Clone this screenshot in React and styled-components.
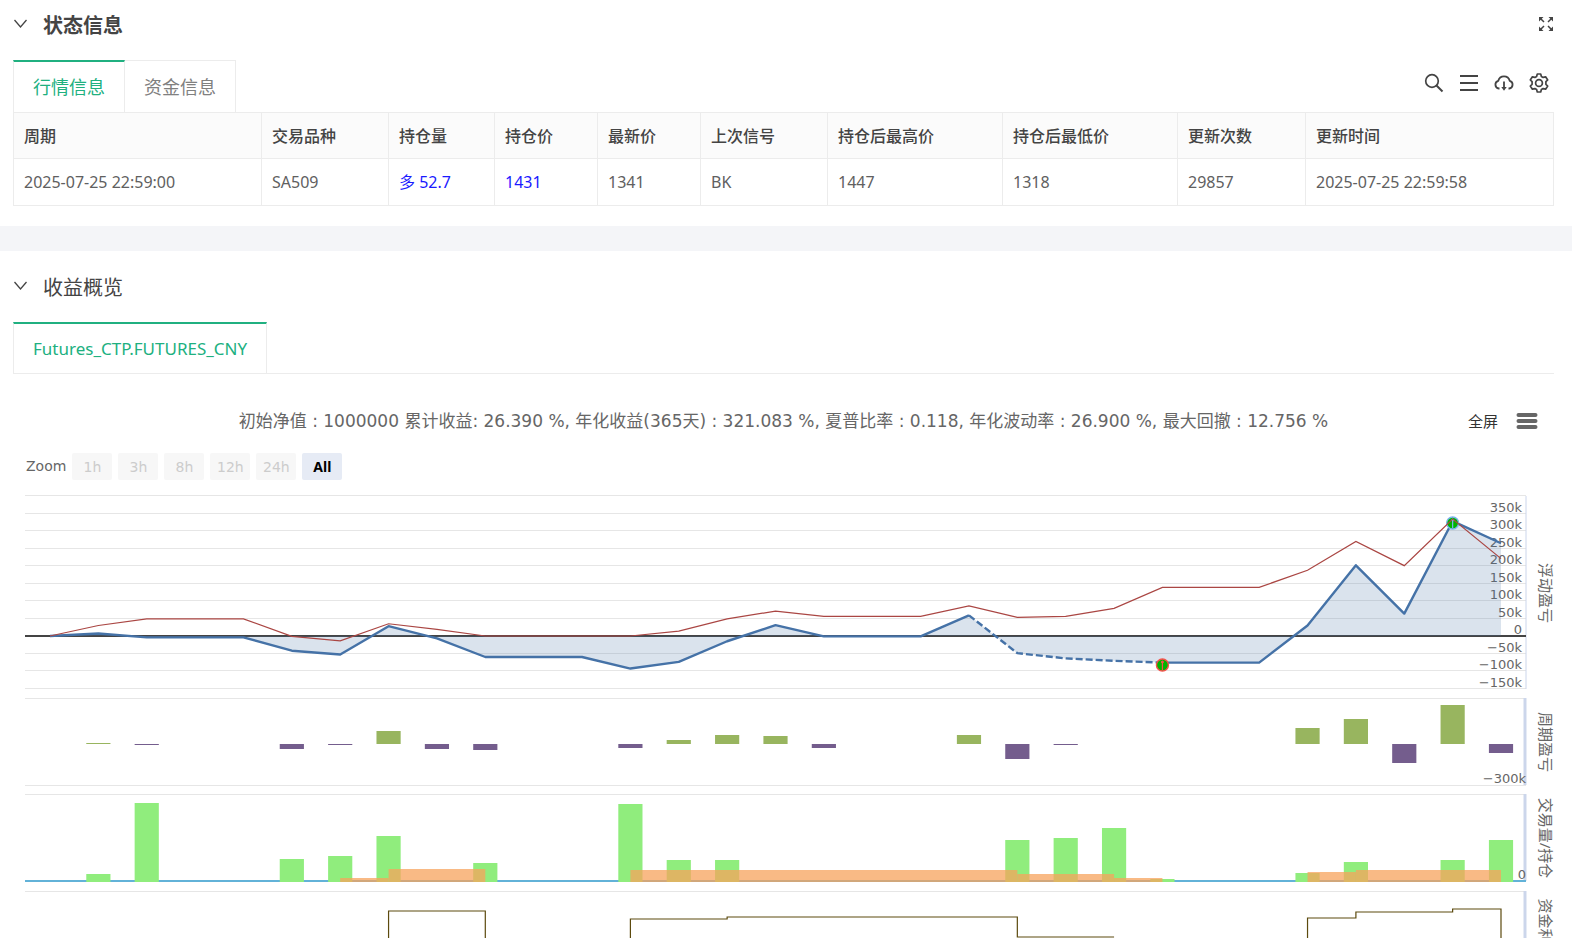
import { useEffect, useRef, useState } from "react";
import styled, { createGlobalStyle } from "styled-components";

const columns = [
  { title: "周期", width: 248, value: "2025-07-25 22:59:00" },
  { title: "交易品种", width: 127, value: "SA509" },
  { title: "持仓量", width: 106, value: "多 52.7", blue: true },
  { title: "持仓价", width: 103, value: "1431", blue: true },
  { title: "最新价", width: 103, value: "1341" },
  { title: "上次信号", width: 127, value: "BK" },
  { title: "持仓后最高价", width: 175, value: "1447" },
  { title: "持仓后最低价", width: 175, value: "1318" },
  { title: "更新次数", width: 128, value: "29857" },
  { title: "更新时间", width: 248, value: "2025-07-25 22:59:58" },
];

const ranges = ["1h", "3h", "8h", "12h", "24h", "All"];

// floating profit and total profit, in thousands
const floating = [
  0, 7, -4, -4, -4, -42, -53, 28, -7, -60, -60, -60, -93, -74, -15, 31, -1, -1,
  -1, 59, -49, -64, -71, -76, -76, -76, 30, 202, 64, 328, 265,
];
const total = [
  0, 30, 49, 49, 49, -1, -14, 35, 19, 0, 0, 0, 0, 14, 49, 71, 56, 56, 56, 86,
  53, 56, 79, 139, 139, 139, 188, 270, 201, 334, 221,
];

// [index, height]
const periodBars = [
  [1, 1], [2, -1], [5, -5], [6, -1], [7, 13], [8, -5], [9, -6], [12, -4],
  [13, 4], [14, 9], [15, 8], [16, -4], [19, 9], [20, -15], [21, -1],
  [26, 16], [27, 25], [28, -19], [29, 39], [30, -9],
];
const volumeBars = [
  [1, 8], [2, 79], [5, 23], [6, 26], [7, 46], [9, 19], [12, 78], [13, 22],
  [14, 22], [20, 42], [21, 44], [22, 54], [23, 3], [26, 9], [27, 20],
  [29, 22], [30, 42],
];

// [from, to, height]
const positions = [
  [6, 7, 4], [7, 9, 13], [12, 20, 12], [20, 22, 8], [22, 23, 4],
  [26, 27, 10], [27, 30, 12],
];

// steps of the fund usage line, [from, to, y]
const usage = [
  [[7, 9, 431]],
  [[12, 14, 439], [14, 20, 437], [20, 22, 457]],
  [[26, 27, 438], [27, 29, 432], [29, 30, 429]],
];

const ticks = [350, 300, 250, 200, 150, 100, 50, 0, -50, -100, -150];
const POINTS = 31;
const ZERO = 156;
const PERIOD_ZERO = 264;
const VOLUME_ZERO = 401;
const LEFT = 12;
const INSET = 25;

function Chart() {
  const box = useRef(null);
  const [width, setWidth] = useState(1540);

  useEffect(() => {
    const observer = new ResizeObserver(([entry]) =>
      setWidth(entry.contentRect.width)
    );
    observer.observe(box.current);
    return () => observer.disconnect();
  }, []);

  const right = width - 28;
  const step = (right - LEFT - 2 * INSET) / (POINTS - 1);
  const x = (i) => LEFT + INSET + i * step;
  const y = (value) => ZERO - value * 0.35;
  const line = (values, from = 0) =>
    values.map((v, i) => `${x(i + from)},${y(v)}`).join(" ");

  const usagePath = (steps) => {
    const last = steps[steps.length - 1];
    return (
      `M${x(steps[0][0])} 480` +
      steps.map(([a, b, top]) => `V${top}H${x(b)}`).join("") +
      (last[2] > 450 ? "" : "V480")
    );
  };

  return (
    <ChartBox ref={box}>
      <svg width={width} height="480" role="img" aria-label="收益概览">
        <g stroke="#e6e6e6">
          {[400, ...ticks].map((t) => (
            <line key={t} x1={LEFT} x2={right} y1={Math.round(y(t)) - 0.5} y2={Math.round(y(t)) - 0.5} />
          ))}
          {[218.5, 305.5, 314.5, 411.5].map((t) => (
            <line key={t} x1={LEFT} x2={right} y1={t} y2={t} />
          ))}
        </g>
        <g stroke="#ccd6eb">
          <line x1={right} x2={right} y1="16" y2="209" />
          <line x1={right - 1} x2={right - 1} y1="218" y2="305" strokeWidth="3" />
          <line x1={right - 1} x2={right - 1} y1="314" y2="401" strokeWidth="3" />
          <line x1={right - 1} x2={right - 1} y1="411" y2="480" strokeWidth="3" />
        </g>

        <AxisLabels textAnchor="end">
          {ticks.map((t) => (
            <text key={t} x={right - 4} y={Math.round(y(t)) - 2}>
              {t === 0 ? "0" : `${t < 0 ? "-" : ""}${Math.abs(t)}k`.replace("-", "−")}
            </text>
          ))}
        </AxisLabels>

        <line x1={LEFT} x2={right} y1={ZERO} y2={ZERO} stroke="#444" strokeWidth="2" />
        <polygon
          points={`${x(0)},${ZERO} ${line(floating)} ${x(30)},${ZERO}`}
          fill="#4572a7"
          fillOpacity="0.2"
        />
        <g fill="none" stroke="#4572a7" strokeWidth="2.4" strokeLinejoin="round">
          <polyline points={line(floating.slice(0, 20))} />
          <polyline points={line(floating.slice(19, 24), 19)} strokeDasharray="7 3" />
          <polyline points={line(floating.slice(23), 23)} />
        </g>
        <Marker x={x(23)} y={185} color="#f5524c" />
        <Marker x={x(29)} y={43} color="#7cb5ec" />
        <polyline points={line(total)} fill="none" stroke="#aa4643" strokeWidth="1.2" />

        {periodBars.map(([i, h]) => (
          <rect
            key={i}
            x={x(i) - step / 4}
            y={h > 0 ? PERIOD_ZERO - h : PERIOD_ZERO}
            width={step / 2}
            height={Math.abs(h)}
            fill={h > 0 ? "#98b55f" : "#745d8d"}
          />
        ))}

        <line x1={LEFT} x2={right} y1={VOLUME_ZERO} y2={VOLUME_ZERO} stroke="#62b2d8" strokeWidth="2" />
        {volumeBars.map(([i, h]) => (
          <rect
            key={i}
            x={x(i) - step / 4}
            y={VOLUME_ZERO + 1 - h}
            width={step / 2}
            height={h}
            fill="#90ed7d"
          />
        ))}
        {positions.map(([a, b, h]) => (
          <rect
            key={a}
            x={x(a)}
            y={VOLUME_ZERO + 1 - h}
            width={x(b) - x(a)}
            height={h}
            fill="#f7a35c"
            fillOpacity="0.75"
          />
        ))}

        {usage.map((steps) => (
          <path key={steps[0][0]} d={usagePath(steps)} fill="none" stroke="#5c4a0e" strokeWidth="1.2" />
        ))}

        <AxisLabels textAnchor="end">
          <text x={right} y="303">−300k</text>
          <text x={right} y="399">0</text>
        </AxisLabels>
        <AxisTitles textAnchor="middle">
          <text transform={`translate(${right + 14} 113) rotate(90)`}>浮动盈亏</text>
          <text transform={`translate(${right + 14} 262) rotate(90)`}>周期盈亏</text>
          <text transform={`translate(${right + 14} 358) rotate(90)`}>交易量/持仓</text>
          <text transform={`translate(${right + 14} 456) rotate(90)`}>资金利用率</text>
        </AxisTitles>
      </svg>
    </ChartBox>
  );
}

function Marker({ x, y, color }) {
  return (
    <g stroke={color}>
      <circle cx={x} cy={y} r="6" fill="#00b400" strokeWidth="1.4" />
      <path d={`M${x} ${y - 4}V${y + 5}`} strokeWidth="1.2" />
      <circle cx={x} cy={y - 3} r="1" fill={color} />
    </g>
  );
}

function Chevron() {
  return (
    <svg width="14" height="14" viewBox="0 0 14 14" fill="none" stroke="#444" strokeWidth="1.3">
      <path d="M1.500 3L7.500 10l6-7" />
    </svg>
  );
}

function ExpandIcon() {
  return (
    <svg width="14" height="14" viewBox="0 0 14 14" fill="#444" stroke="#444" strokeWidth="1.5">
      <path d="M1.500 1.500l3.500 3.500M12.500 1.500L9 5M1.500 12.500L5 9M12.500 12.500L9 9" />
      <path d="M0 0h4.500L0 4.500zM14 0H9.500L14 4.500zM0 14h4.500L0 9.500zM14 14H9.500L14 9.500z" stroke="none" />
    </svg>
  );
}

function SearchIcon() {
  return (
    <svg width="20" height="20" viewBox="0 0 20 20" fill="none" stroke="#444" strokeWidth="1.7">
      <circle cx="8" cy="8" r="6.3" />
      <path d="M12.500 12.500l6 6" strokeWidth="2" />
    </svg>
  );
}

function ListIcon() {
  return (
    <svg width="20" height="20" viewBox="0 0 20 20" stroke="#444" strokeWidth="2">
      <path d="M1 3h18M1 10h18M1 17h18" />
    </svg>
  );
}

function CloudIcon() {
  return (
    <svg width="20" height="20" viewBox="0 0 20 20" fill="none" stroke="#444" strokeWidth="1.8">
      <path d="M5.500 15.500H4.800A3.900 3.900 0 0 1 4.200 7.900 6 6 0 0 1 15.800 7.900 3.900 3.900 0 0 1 15.200 15.500H14.500" />
      <path d="M10 8.500V15" />
      <path d="M7.300 14h5.400L10 17.800z" fill="#444" stroke="none" />
    </svg>
  );
}

function GearIcon() {
  return (
    <svg width="20" height="20" viewBox="0 0 20 20" fill="none" stroke="#444" strokeWidth="1.7" strokeLinejoin="round">
      <circle cx="10" cy="10" r="3.400" />
      <path d="M8.300 1h3.400l.7 2.400 1.700 1 2.500-.600 2.100 3.200-1.800 1.700v2.600l1.800 1.700-2.100 3.200-2.500-.600-1.700 1-.7 2.400H8.300l-.7-2.400-1.700-1-2.500.600-2.100-3.200 1.800-1.700V8.700L1.300 7l2.100-3.200 2.500.600 1.700-1z" />
    </svg>
  );
}

function MenuIcon() {
  return (
    <svg width="22" height="18" viewBox="0 0 22 18" stroke="#666" strokeWidth="4" strokeLinecap="round">
      <path d="M2.500 3h17M2.500 9h17M2.500 15h17" />
    </svg>
  );
}

function App() {
  const [tab, setTab] = useState("行情信息");
  const [range, setRange] = useState("All");

  return (
    <Page>
      <GlobalStyle />
      <Section>
        <SectionHeader>
          <IconButton aria-label="收起">
            <Chevron />
          </IconButton>
          <Title $bold>状态信息</Title>
          <IconButton aria-label="全屏显示">
            <ExpandIcon />
          </IconButton>
        </SectionHeader>
        <TabBar>
          <Tabs role="tablist">
            {["行情信息", "资金信息"].map((name) => (
              <Tab
                key={name}
                role="tab"
                aria-selected={tab === name}
                $active={tab === name}
                onClick={() => setTab(name)}
              >
                {name}
              </Tab>
            ))}
          </Tabs>
          <Tools>
            <IconButton aria-label="搜索">
              <SearchIcon />
            </IconButton>
            <IconButton aria-label="列">
              <ListIcon />
            </IconButton>
            <IconButton aria-label="下载">
              <CloudIcon />
            </IconButton>
            <IconButton aria-label="设置">
              <GearIcon />
            </IconButton>
          </Tools>
        </TabBar>
        <Table>
          <colgroup>
            {columns.map((c) => (
              <Column key={c.title} $width={c.width} />
            ))}
          </colgroup>
          <thead>
            <tr>
              {columns.map((c) => (
                <HeadCell key={c.title}>{c.title}</HeadCell>
              ))}
            </tr>
          </thead>
          <tbody>
            <tr>
              {columns.map((c) => (
                <Cell key={c.title} $blue={c.blue}>
                  {c.value}
                </Cell>
              ))}
            </tr>
          </tbody>
        </Table>
      </Section>

      <Divider />

      <Section>
        <SectionHeader>
          <IconButton aria-label="收起">
            <Chevron />
          </IconButton>
          <Title>收益概览</Title>
        </SectionHeader>
        <TabBar $line>
          <Tabs role="tablist">
            <Tab role="tab" aria-selected="true" $active $latin>
              Futures_CTP.FUTURES_CNY
            </Tab>
          </Tabs>
        </TabBar>
        <ChartHeader>
          <Summary>
            初始净值 : 1000000 累计收益: 26.390 %, 年化收益(365天) : 321.083 %,
            夏普比率 : 0.118, 年化波动率 : 26.900 %, 最大回撤 : 12.756 %
          </Summary>
          <ChartMenu>
            <FullButton>全屏</FullButton>
            <IconButton aria-label="菜单">
              <MenuIcon />
            </IconButton>
          </ChartMenu>
        </ChartHeader>
        <RangeBar>
          <span>Zoom</span>
          {ranges.map((r) => (
            <RangeButton
              key={r}
              disabled={r !== "All"}
              $active={range === r}
              onClick={() => setRange(r)}
            >
              {r}
            </RangeButton>
          ))}
        </RangeBar>
        <Chart />
      </Section>
    </Page>
  );
}

export default App;

const chartFont = `"DejaVu Sans", "Noto Sans CJK SC", sans-serif`;

const GlobalStyle = createGlobalStyle`
  * {
    box-sizing: border-box;
  }

  body {
    margin: 0;
    background: #fff;
    font-family: "Noto Sans", "Noto Sans CJK SC", sans-serif;
    color: #444;
  }

  button {
    font-family: inherit;
    border: none;
    background: none;
    padding: 0;
    cursor: pointer;
  }
`;

const Page = styled.main`
  height: 100vh;
  overflow: hidden;
`;

const Section = styled.section`
  padding: 0 18px 0 13px;
`;

const SectionHeader = styled.header`
  display: flex;
  align-items: center;
  gap: 16px;
  height: 60px;
  padding-bottom: 12px;

  & > :last-child {
    margin-right: auto;
  }

  & > button:last-child {
    margin: 0 1px 0 auto;
  }
`;

const Title = styled.h2`
  margin: 0;
  padding-top: 4px;
  font-size: 20px;
  line-height: 30px;
  font-weight: ${(props) => (props.$bold ? 700 : 400)};
`;

const IconButton = styled.button`
  display: flex;
`;

const TabBar = styled.div`
  display: flex;
  justify-content: space-between;
  height: 52px;
  border-bottom: ${(props) => (props.$line ? "1px solid #ececec" : "none")};
`;

const Tabs = styled.div`
  display: flex;
`;

const Tab = styled.button`
  padding: 0 19px;
  border: solid #ececec;
  border-width: 1px 1px 0 0;
  border-top: ${(props) =>
    props.$active ? "2px solid #20b080" : "1px solid #ececec"};
  font-size: ${(props) => (props.$latin ? 17 : 18)}px;
  line-height: 24px;
  color: ${(props) => (props.$active ? "#20b080" : "#808080")};

  &:first-child {
    border-left: 1px solid #ececec;
  }
`;

const Tools = styled.div`
  display: flex;
  align-items: center;
  gap: 15px;
  padding: 0 5px 6px 0;
`;

const Table = styled.table`
  width: 100%;
  table-layout: fixed;
  border-collapse: collapse;
`;

const Column = styled.col`
  width: ${(props) => props.$width}px;
`;

const HeadCell = styled.th`
  height: 46px;
  padding: 0 10px 2px;
  border: 1px solid #ececec;
  background: #fbfbfb;
  font-size: 16px;
  font-weight: 500;
  text-align: left;
  white-space: nowrap;
`;

const Cell = styled.td`
  height: 47px;
  padding: 0 10px;
  border: 1px solid #ececec;
  font-size: 16px;
  line-height: 24px;
  white-space: nowrap;
  color: ${(props) => (props.$blue ? "#1a1aff" : "#606060")};
`;

const Divider = styled.div`
  height: 25px;
  margin: 20px 0 11px;
  background: #f4f5f8;
`;

const ChartHeader = styled.div`
  display: grid;
  grid-template-columns: 1fr auto 1fr;
  align-items: center;
  padding-top: 34px;
`;

const Summary = styled.h3`
  grid-column: 2;
  margin: 0;
  font-family: ${chartFont};
  font-size: 17px;
  line-height: 26px;
  font-weight: 400;
  color: #666;
`;

const ChartMenu = styled.div`
  display: flex;
  justify-content: flex-end;
  align-items: center;
  gap: 18px;
  padding-right: 16px;
`;

const FullButton = styled.button`
  font-size: 15px;
  line-height: 24px;
  color: #333;
`;

const RangeBar = styled.div`
  display: flex;
  align-items: center;
  gap: 6px;
  padding: 19px 13px 0;
  font-family: ${chartFont};
  font-size: 14px;
  line-height: 27px;
  color: #666;
`;

const RangeButton = styled.button`
  width: 40px;
  height: 27px;
  border-radius: 2px;
  font-family: ${(props) => (props.$active ? `"Noto Sans", sans-serif` : "inherit")};
  font-size: 14px;
  background: ${(props) => (props.$active ? "#e6ebf5" : "#f7f7f7")};
  color: ${(props) => (props.$active ? "#000" : "#ccc")};
  font-weight: ${(props) => (props.$active ? 700 : 400)};
`;

const ChartBox = styled.div`
  svg {
    display: block;
    overflow: visible;
  }
`;

const AxisLabels = styled.g`
  font-family: ${chartFont};
  font-size: 13px;
  fill: #666;
`;

const AxisTitles = styled.g`
  font-size: 15px;
  fill: #666;
`;
